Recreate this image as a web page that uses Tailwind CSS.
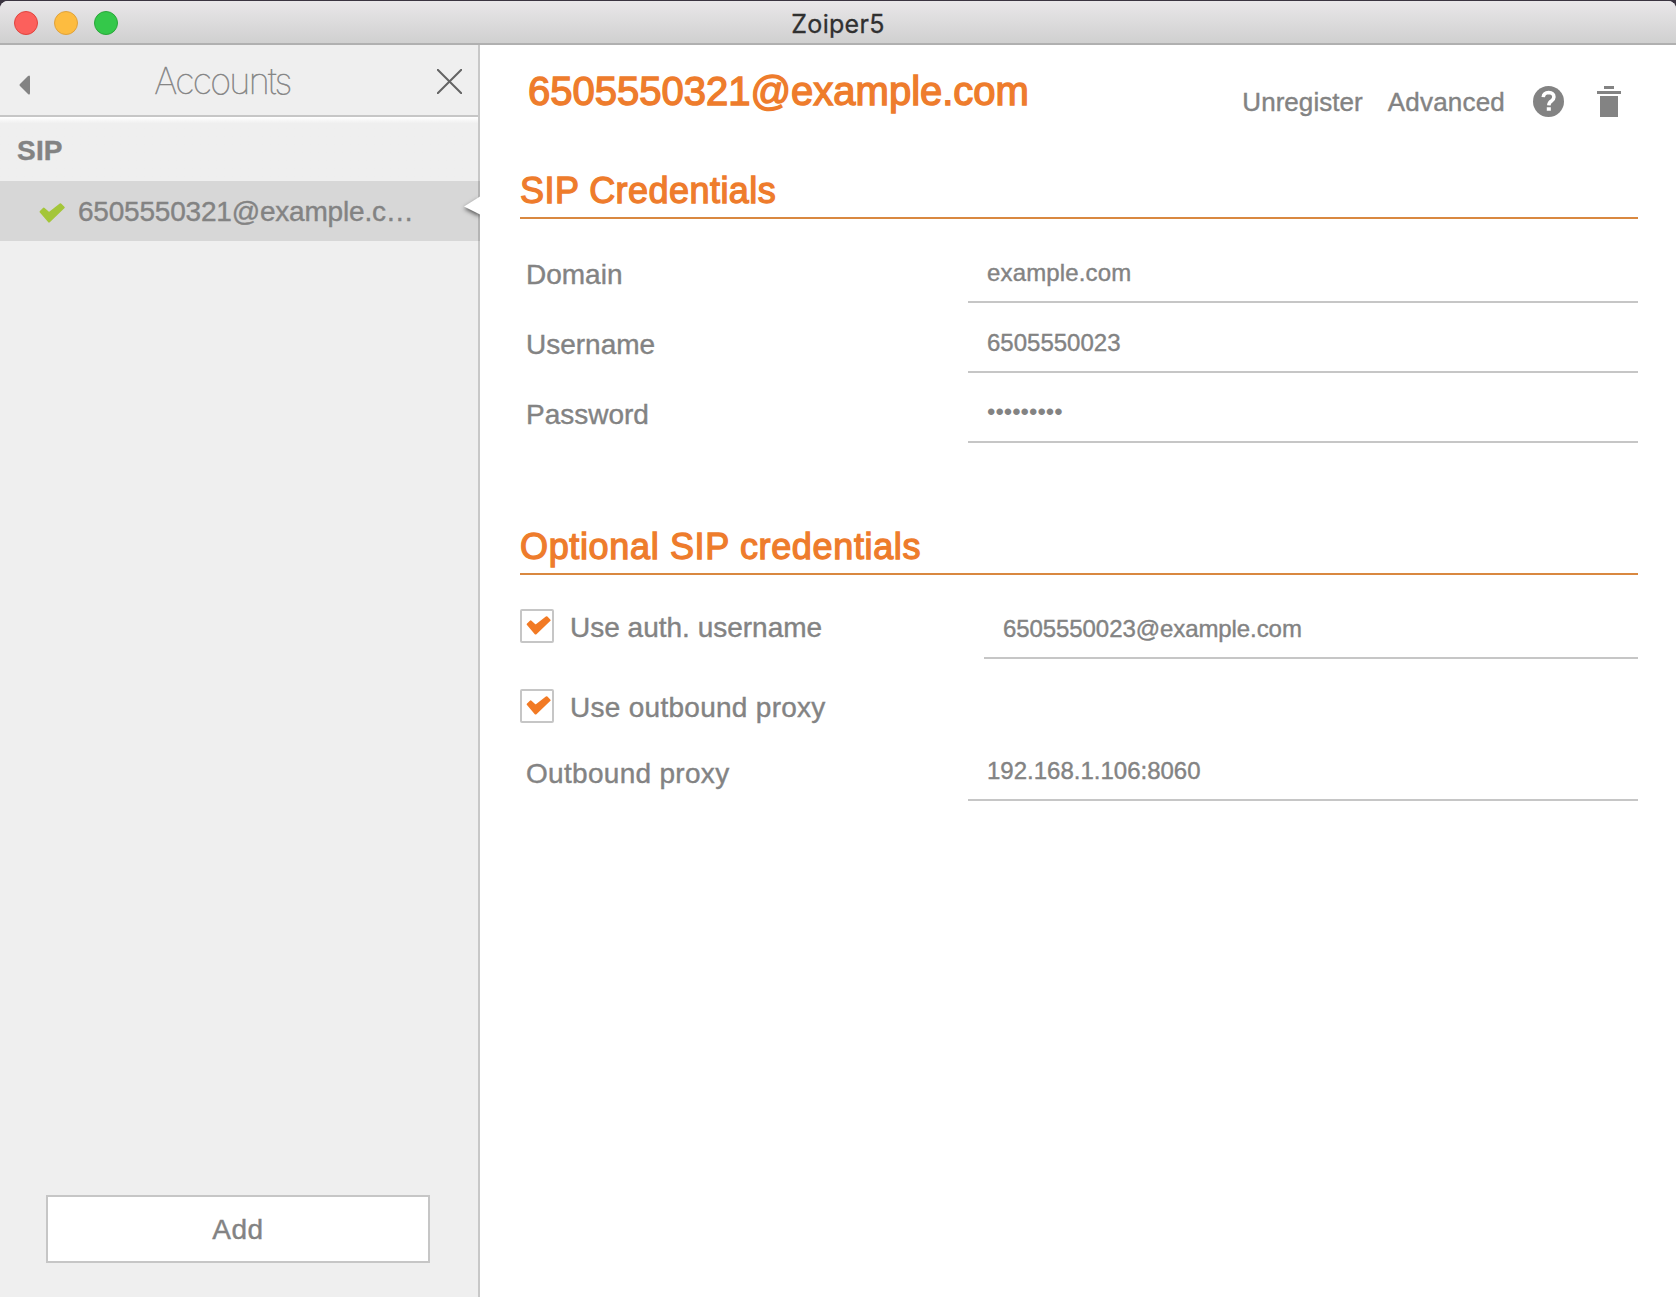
<!DOCTYPE html>
<html lang="en">
<head>
<meta charset="utf-8">
<title>Zoiper5</title>
<script src="https://cdn.jsdelivr.net/npm/@tailwindcss/browser@4"></script>
</head>
<body class="h-[1297px] w-[1676px] overflow-hidden bg-[#3a3440] pt-px font-['Liberation_Sans',Arial,sans-serif] text-[28px] leading-8 text-[#838383] [-webkit-text-stroke:0.4px_#838383]">
<svg class="hidden"><symbol id="check" viewBox="0 0 26 20"><path d="M1.800 8.800 4.800 5.800 10 10.500 21.500 1.500 24.500 4.500 10 18.300Z" fill="currentColor" stroke="currentColor" stroke-width="2.400" stroke-linejoin="round"/></symbol></svg>
<div class="flex h-[1296px] flex-col overflow-hidden rounded-t-[8px] bg-white">
  <header class="grid h-11 shrink-0 grid-cols-[1fr_auto_1fr] items-center border-b-2 border-[#b0b0b0] bg-linear-to-b from-[#e9e7e9] to-[#d0d0d0]">
    <div class="flex gap-4 pl-3.5 pt-0.5">
      <span class="size-6 rounded-full border border-[#e0443e] bg-[#fc605c]"></span>
      <span class="size-6 rounded-full border border-[#dfa23c] bg-[#fdbc40]"></span>
      <span class="size-6 rounded-full border border-[#2aa63a] bg-[#34c84a]"></span>
    </div>
    <h1 class="pt-1 font-[Inter] text-[25px] leading-8 tracking-[0.3px] text-[#303030] [-webkit-text-stroke:0.3px_#303030]">Zoiper5</h1>
  </header>

  <div class="flex min-h-0 grow">
    <aside class="relative flex w-[480px] shrink-0 flex-col border-r-2 border-[#c8c8c8] bg-[#efefef]">
      <div class="flex h-[72px] shrink-0 items-center border-b-2 border-[#c6c6c6]">
        <svg class="ml-[19px] mt-[10px] h-5 w-[11px]" viewBox="0 0 11 20" fill="#838383"><path d="M1 9 9 1Q11-.5 11 2V18Q11 20.500 9 19L1 11Q0 10 1 9Z"/></svg>
        <h2 class="grow pr-[22px] pt-0.5 text-center font-[Inter] text-[36px] font-thin leading-10 tracking-[-1.7px] [-webkit-text-stroke:0.5px_#838383]">Accounts</h2>
        <svg class="mr-4 mt-0.5 h-[25px] w-[25px]" viewBox="0 0 25 25" stroke="#646464" stroke-width="2"><path d="M0 0 25 25M25 0 0 25"/></svg>
      </div>
      <div class="h-16 bg-linear-to-b from-white to-[#efefef] to-10% pl-[17px] pt-[18px] font-bold tracking-[0.2px]">SIP</div>
      <div class="-mr-0.5 flex h-[60px] items-center border-r-2 border-[#b4b4b4] bg-[#d7d7d7]">
        <svg class="ml-[39px] mt-1 h-5 w-[26px] text-[#a4c639]"><use href="#check"/></svg>
        <span class="ml-[13px] pt-0.5 tracking-[-0.2px]">6505550321@example.c…</span>
      </div>
      <svg class="absolute left-[458px] top-[144px] h-9 w-[22px]" viewBox="0 0 22 36"><path d="M22 7.500 6 17.500 22 25.500Z" fill="#fff" class="drop-shadow-[0_2px_2px_rgba(0,0,0,0.6)]"/></svg>
      <button class="mx-[46px] mb-[34px] mt-auto h-[68px] w-96 border-2 border-[#c6c6c6] bg-white pt-0.5 tracking-[0.5px]">Add</button>
    </aside>

    <main class="grow pl-10 pr-[38px]">
      <div class="flex h-[120px] justify-between pr-[17px]">
        <h2 class="pl-2 pt-[23px] text-[40px] leading-[46px] text-[#ee7c2c] [-webkit-text-stroke:1.400px_#ee7c2c]">6505550321@example.com</h2>
        <div class="flex h-8 pt-[41px] text-[26px]">
          <span class="tracking-[0.05px]">Unregister</span>
          <span class="ml-[25px] tracking-[0.2px]">Advanced</span>
          <svg class="ml-7 size-[31px]" viewBox="2 2 20 20" fill="#838383"><circle cx="12" cy="12" r="10"/><path d="M8.600 9.200Q8.900 6.300 12.100 6.200 15.400 6.300 15.500 9.100 15.500 10.500 13.900 11.700 12.300 12.700 12.200 14.500" fill="none" stroke="#fff" stroke-width="2.300"/><path d="M10.900 15.700H13.500V18H10.900Z" fill="#fff"/></svg>
          <svg class="ml-[33px] h-8 w-6" viewBox="0 0 24 32" fill="#838383"><path d="M7 0H17V3H7ZM0 5H24V8H0ZM3 10H21V31H3Z"/></svg>
        </div>
      </div>

      <section>
        <h3 class="h-[54px] border-b-2 border-[#d98840] pt-[5px] text-[36px] leading-[42px] tracking-[0.45px] text-[#ee7c2c] [-webkit-text-stroke:1.300px_#ee7c2c]">SIP Credentials</h3>
        <div class="mt-[14px]">
          <div class="flex h-[70px]">
            <span class="w-[448px] pl-1.5 pt-[26px]">Domain</span>
            <span class="grow border-b-2 border-[#c6c6c6] pl-[19px] pt-6 text-[24px] tracking-[0.15px]">example.com</span>
          </div>
          <div class="flex h-[70px]">
            <span class="w-[448px] pl-1.5 pt-[26px]">Username</span>
            <span class="grow border-b-2 border-[#c6c6c6] pl-[19px] pt-6 text-[24px]">6505550023</span>
          </div>
          <div class="flex h-[70px]">
            <span class="w-[448px] pl-1.5 pt-[26px]">Password</span>
            <span class="grow border-b-2 border-[#c6c6c6] pl-[19px] pt-[23px] text-[24px] [-webkit-text-stroke:0px]">•••••••••</span>
          </div>
        </div>
      </section>

      <section class="mt-[78px]">
        <h3 class="h-[54px] border-b-2 border-[#d98840] pt-[5px] text-[36px] leading-[42px] tracking-[0.65px] text-[#ee7c2c] [-webkit-text-stroke:1.300px_#ee7c2c]">Optional SIP credentials</h3>
        <div class="flex h-[84px]">
          <span class="mt-[34px] flex size-[34px] items-center justify-center rounded-xs border-2 border-[#c6c6c6] pb-px pl-0.5"><svg class="h-[19px] w-[25px] text-[#f27a24]"><use href="#check"/></svg></span>
          <span class="w-[430px] pl-4 pt-[37px]">Use auth. username</span>
          <span class="grow border-b-2 border-[#c6c6c6] pl-[19px] pt-[38px] text-[24px] tracking-[-0.08px]">6505550023@example.com</span>
        </div>
        <div class="mt-[30px] flex h-[58px]">
          <span class="flex size-[34px] items-center justify-center rounded-xs border-2 border-[#c6c6c6] pb-px pl-0.5"><svg class="h-[19px] w-[25px] text-[#f27a24]"><use href="#check"/></svg></span>
          <span class="pl-4 pt-[3px] tracking-[0.28px]">Use outbound proxy</span>
        </div>
        <div class="flex h-[54px]">
          <span class="w-[448px] pl-1.5 pt-[11px] tracking-[0.3px]">Outbound proxy</span>
          <span class="grow border-b-2 border-[#c6c6c6] pl-[19px] pt-2 text-[24px]">192.168.1.106:8060</span>
        </div>
      </section>
    </main>
  </div>
</div>
</body>
</html>
